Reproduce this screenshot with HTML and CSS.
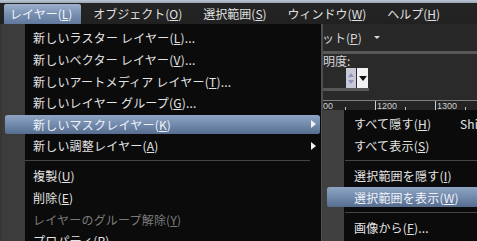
FILE: index.html
```html
<!DOCTYPE html>
<html lang="ja">
<head>
<meta charset="utf-8">
<title>レイヤー メニュー</title>
<link rel="stylesheet" href="styles.css">
</head>
<body>
<div class="app">
  <nav class="menubar">
    <span class="mb-item active">レイヤー(<u>L</u>)</span>
    <span class="mb-item">オブジェクト(<u>O</u>)</span>
    <span class="mb-item">選択範囲(<u>S</u>)</span>
    <span class="mb-item">ウィンドウ(<u>W</u>)</span>
    <span class="mb-item">ヘルプ(<u>H</u>)</span>
  </nav>

  <div class="workspace">
    <div class="doc-area"></div>
    <div class="panel">
      <div class="toolbar"><span class="tb-text">ット(<u>P</u>)</span><span class="tb-arrow"></span></div>
      <div class="band"></div>
      <div class="props">
        <div class="prop-label">明度:</div>
        <div class="spinner">
          <span class="spin-arrows"><i class="up"></i><i class="down"></i></span>
          <span class="spin-drop"><i></i></span>
        </div>
      </div>
      <div class="band short"></div>
      <div class="ruler">
        <span class="rcell first">00</span>
        <span class="rcell">1200</span>
        <span class="rcell">1300</span>
      </div>
    </div>
  </div>

  <div class="menu main-menu">
    <div class="mi">新しいラスター レイヤー(<u>L</u>)...</div>
    <div class="mi">新しいベクター レイヤー(<u>V</u>)...</div>
    <div class="mi">新しいアートメディア レイヤー(<u>T</u>)...</div>
    <div class="mi">新しいレイヤー グループ(<u>G</u>)...</div>
    <div class="mi active">新しいマスクレイヤー(<u>K</u>)<span class="arrow"></span></div>
    <div class="mi">新しい調整レイヤー(<u>A</u>)<span class="arrow"></span></div>
    <div class="sep"></div>
    <div class="mi">複製(<u>U</u>)</div>
    <div class="mi">削除(<u>E</u>)</div>
    <div class="mi disabled">レイヤーのグループ解除(<u>Y</u>)</div>
    <div class="mi">プロパティ(<u>P</u>)</div>
  </div>

  <div class="menu sub-menu">
    <div class="si"><span>すべて隠す(<u>H</u>)</span><span class="key">Shift+Ctrl+H</span></div>
    <div class="si"><span>すべて表示(<u>S</u>)</span></div>
    <div class="sep"></div>
    <div class="si"><span>選択範囲を隠す(<u>I</u>)</span></div>
    <div class="si active"><span>選択範囲を表示(<u>W</u>)</span></div>
    <div class="sep"></div>
    <div class="si"><span>画像から(<u>F</u>)...</span></div>
  </div>
</div>
</body>
</html>
```

FILE: styles.css
```css
html, body {
  margin: 0;
  padding: 0;
}

body {
  width: 477px;
  height: 241px;
  overflow: hidden;
  background: #2a2a2a;
  font-family: "Noto Sans CJK JP", "Noto Sans", sans-serif;
  font-size: 12px;
}

u {
  text-decoration: underline;
  text-underline-offset: 1px;
}

.app {
  position: relative;
  width: 477px;
  height: 241px;
  overflow: hidden;
}

/* ---------- menu bar ---------- */
.menubar {
  height: 24px;
  box-sizing: border-box;
  display: flex;
  align-items: flex-end;
  padding-left: 4px;
  background: linear-gradient(to bottom, #bcc6d3 0, #9ba7b8 3px, #242424 3px, #212121 24px);
}

.mb-item {
  height: 20px;
  line-height: 20px;
  padding: 0 9px 0 6px;
  margin-right: 6px;
  color: #e0e0e0;
  white-space: nowrap;
}

.mb-item.active {
  color: #f2f4f8;
  border-radius: 2px 2px 0 0;
  background: linear-gradient(to bottom, #9db1cd 0%, #7890b2 50%, #5f789c 100%);
}

/* ---------- background workspace ---------- */
.workspace {
  display: flex;
  height: 217px;
}

.doc-area {
  flex: 0 0 323px;
  background: #3b3631;
}

.panel {
  flex: 1;
  min-width: 0;
  overflow: hidden;
  background: #2a2a2a;
  display: flex;
  flex-direction: column;
  color: #d6d6d6;
}

.toolbar {
  height: 27px;
  flex: none;
  display: flex;
  align-items: center;
  gap: 12px;
  background: #282828;
}

.tb-text {
  margin-left: -1px;
  white-space: nowrap;
}

.tb-arrow {
  width: 0;
  height: 0;
  border-top: 3px solid #dcdcdc;
  border-left: 3px solid transparent;
  border-right: 3px solid transparent;
}

.band {
  height: 3px;
  flex: none;
  background: #575757;
}

.band.short {
  width: 46px;
}

.props {
  height: 34px;
  flex: none;
  display: flex;
  flex-direction: column;
}

.prop-label {
  height: 14px;
  line-height: 14px;
  white-space: nowrap;
}

.spinner {
  display: flex;
  margin-left: 23px;
  height: 20px;
  gap: 1px;
}

.spin-arrows {
  width: 10px;
  display: flex;
  flex-direction: column;
  justify-content: center;
  align-items: center;
  gap: 3px;
  background: #c9c9d6;
}

.spin-arrows i {
  width: 0;
  height: 0;
  border-left: 3px solid transparent;
  border-right: 3px solid transparent;
}

.spin-arrows .up { border-bottom: 4px solid #8f93c4; }
.spin-arrows .down { border-top: 4px solid #8f93c4; }

.spin-drop {
  width: 11px;
  background: #f2f2f2;
  display: flex;
  justify-content: center;
  align-items: center;
}

.spin-drop i {
  width: 0;
  height: 0;
  border-top: 5px solid #111;
  border-left: 4px solid transparent;
  border-right: 4px solid transparent;
}

.ruler {
  margin-top: 9px;
  height: 10px;
  flex: none;
  display: flex;
  border-top: 1px solid #808080;
  background: #242424;
}

.rcell {
  flex: 0 0 60px;
  box-sizing: border-box;
  border-left: 1px solid #cfcfcf;
  padding-left: 1px;
  font-family: "Liberation Sans", sans-serif;
  font-size: 9px;
  line-height: 10px;
  color: #cfcfcf;
  background: linear-gradient(#bdbdbd, #bdbdbd) 29px 6px / 1px 3px no-repeat;
}

.rcell.first {
  flex-basis: 52px;
  border-left: 0;
  padding-left: 0;
  background-position: 22px 6px;
}

/* ---------- drop-down menus ---------- */
.menu {
  position: absolute;
  box-sizing: border-box;
  color: #e4e4e4;
  white-space: nowrap;
  letter-spacing: 0.2px;
}

.main-menu {
  left: 2px;
  top: 24px;
  width: 321px;
  height: 240px;
  padding-top: 3.2px;
  border-right: 2px solid #4e4e4e;
  background: linear-gradient(to right, #3c3c3c 0, #3c3c3c 23px, #0b0b0b 23px);
}

.mi {
  height: 21.6px;
  box-sizing: border-box;
  display: flex;
  align-items: center;
  padding-left: 31px;
}

.mi.active {
  margin: 0 1px 0 3px;
  padding-left: 28px;
  color: #eef2f8;
  border-top: 1px solid transparent;
  border-bottom: 1px solid transparent;
  border-radius: 3px;
  background: linear-gradient(to bottom, #90a5c3 0%, #728aac 50%, #566d8f 100%);
  background-clip: padding-box;
}

.mi.disabled {
  color: #7b7b7b;
}

.arrow {
  margin-left: auto;
  margin-right: 5px;
  width: 0;
  height: 0;
  border-left: 5px solid #f2f2f2;
  border-top: 4px solid transparent;
  border-bottom: 4px solid transparent;
}

.mi.active .arrow {
  margin-right: 4px;
}

.main-menu .sep {
  height: 1px;
  margin: 3.7px 11px 3.7px 23px;
  background: #454545;
}

.sub-menu {
  left: 322px;
  top: 110px;
  width: 160px;
  height: 140px;
  padding-top: 3.2px;
  background: linear-gradient(to right, #404040 0, #404040 22px, #0b0b0b 22px);
}

.si {
  height: 21.6px;
  box-sizing: border-box;
  display: grid;
  grid-template-columns: 106px auto;
  align-items: center;
  padding-left: 32px;
}

.si.active {
  margin-left: 5px;
  padding-left: 27px;
  color: #eef2f8;
  border-top: 1px solid transparent;
  border-bottom: 1px solid transparent;
  border-radius: 3px 0 0 3px;
  background: linear-gradient(to bottom, #90a5c3 0%, #728aac 50%, #566d8f 100%);
  background-clip: padding-box;
}

.sub-menu .sep {
  height: 1px;
  margin: 3.7px 0 3.7px 23px;
  background: #454545;
}
```
